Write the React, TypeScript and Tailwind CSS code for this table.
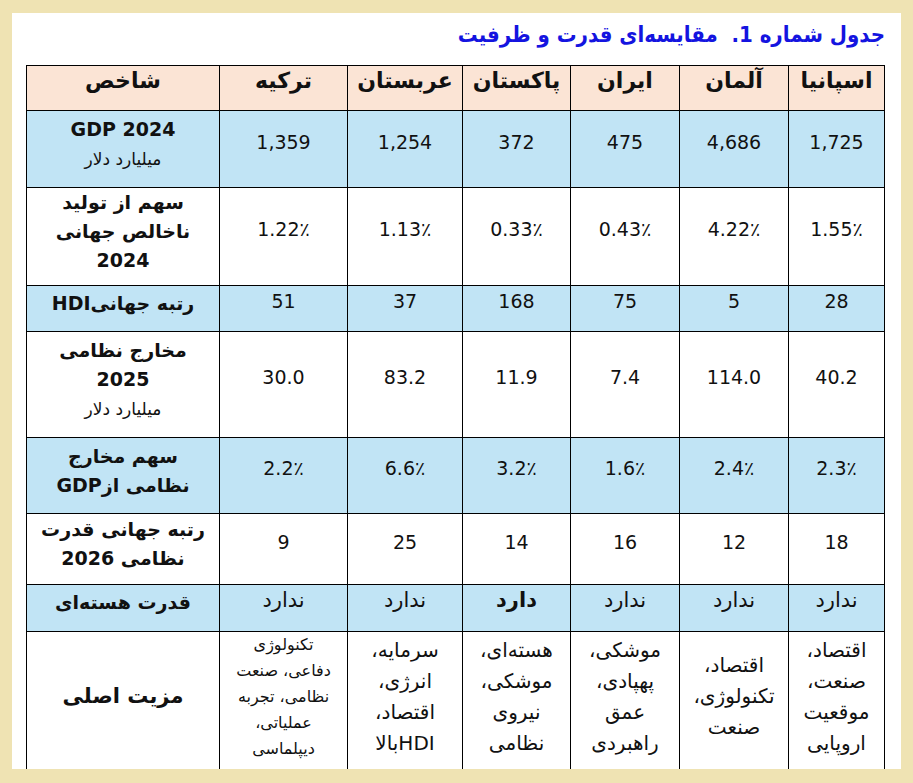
import type { ReactNode } from 'react'

type Row = {
  h: string
  bg: string
  label: ReactNode
  vals: ReactNode[]
  fa?: boolean
}

const HEAD = ['اسپانیا', 'آلمان', 'ایران', 'پاکستان', 'عربستان', 'ترکیه', 'شاخص']

const ROWS: Row[] = [
  {
    h: 'h-[77px]', bg: 'bg-[#c1e4f5]',
    label: <>GDP 2024<br /><span className="font-normal text-[17px]">میلیارد دلار</span></>,
    vals: ['1,725', '4,686', '475', '372', '1,254', '1,359'],
  },
  {
    h: 'h-[98px]', bg: 'bg-white',
    label: <>سهم از تولید<br />ناخالص جهانی<br />2024</>,
    vals: ['1.55٪', '4.22٪', '0.43٪', '0.33٪', '1.13٪', '1.22٪'],
  },
  {
    h: 'h-[46px]', bg: 'bg-[#c1e4f5]',
    label: 'رتبه جهانیHDI',
    vals: ['28', '5', '75', '168', '37', '51'],
  },
  {
    h: 'h-[106px]', bg: 'bg-white',
    label: <>مخارج نظامی<br />2025<br /><span className="font-normal text-[17px]">میلیارد دلار</span></>,
    vals: ['40.2', '114.0', '7.4', '11.9', '83.2', '30.0'],
  },
  {
    h: 'h-[76px]', bg: 'bg-[#c1e4f5]',
    label: <>سهم مخارج<br />نظامی ازGDP</>,
    vals: ['2.3٪', '2.4٪', '1.6٪', '3.2٪', '6.6٪', '2.2٪'],
  },
  {
    h: 'h-[71px]', bg: 'bg-white',
    label: <>رتبه جهانی قدرت<br />نظامی 2026</>,
    vals: ['18', '12', '16', '14', '25', '9'],
  },
  {
    h: 'h-[46px]', bg: 'bg-[#c1e4f5]', fa: true,
    label: 'قدرت هسته‌ای',
    vals: ['ندارد', 'ندارد', 'ندارد', <b key="d">دارد</b>, 'ندارد', 'ندارد'],
  },
]

const ADV: ReactNode[] = [
  <>اقتصاد،<br />صنعت،<br />موقعیت<br />اروپایی</>,
  <>اقتصاد،<br />تکنولوژی،<br />صنعت</>,
  <>موشکی،<br />پهپادی،<br />عمق<br />راهبردی</>,
  <>هسته‌ای،<br />موشکی،<br />نیروی<br />نظامی</>,
  <>سرمایه،<br />انرژی،<br />اقتصاد،<br />HDIبالا</>,
]

const cell = 'border border-black text-center align-middle px-1'

export default function App() {
  return (
    <div className="min-h-screen bg-[#efe3b3] pl-[12px] pt-[13px] font-['DejaVu_Sans',sans-serif] text-[#111]">
      <div dir="rtl" className="w-[889px] h-[756px] overflow-hidden bg-white pl-[15px] pr-[16px]">
        <h1 className="h-[52px] pt-[8px] text-[22px] leading-[28px] font-bold text-[#1414e0] font-['DejaVu_Sans_Condensed','DejaVu_Sans',sans-serif]">
          جدول شماره 1.&nbsp; مقایسه‌ای قدرت و ظرفیت
        </h1>

        <table className="w-[858px] table-fixed border-collapse">
          <colgroup>
            <col className="w-[96px]" />
            <col className="w-[109px]" />
            <col className="w-[109px]" />
            <col className="w-[108px]" />
            <col className="w-[115px]" />
            <col className="w-[128px]" />
            <col className="w-[193px]" />
          </colgroup>
          <tbody>
            <tr className="h-[45px] bg-[#fbe4d5]">
              {HEAD.map(t => (
                <th key={t} className={`${cell} pb-[14px] text-[22px] leading-[30px] font-bold`}>{t}</th>
              ))}
            </tr>

            {ROWS.map((r, i) => (
              <tr key={i} className={`${r.h} ${r.bg}`}>
                {r.vals.map((v, j) => (
                  <td key={j} className={`${cell} pb-[14px] ${r.fa ? 'text-[21px]' : 'text-[19px]'}`}>{v}</td>
                ))}
                <td className={`${cell} pb-[10px] text-[19px] leading-[29px] font-bold`}>{r.label}</td>
              </tr>
            ))}

            {/* ردیف آخر — از پایین بریده می‌شود */}
            <tr className="h-[142px] bg-white">
              {ADV.map((v, j) => (
                <td key={j} className={`${cell} pb-[14px] text-[20px] leading-[31px]`}>{v}</td>
              ))}
              <td className={`${cell} pb-[14px] text-[16px] leading-[26px]`}>
                تکنولوژی<br />دفاعی، صنعت<br />نظامی، تجربه<br />عملیاتی،<br />دیپلماسی
              </td>
              <td className={`${cell} pb-[14px] text-[21px] font-bold`}>مزیت اصلی</td>
            </tr>
          </tbody>
        </table>
      </div>
    </div>
  )
}
